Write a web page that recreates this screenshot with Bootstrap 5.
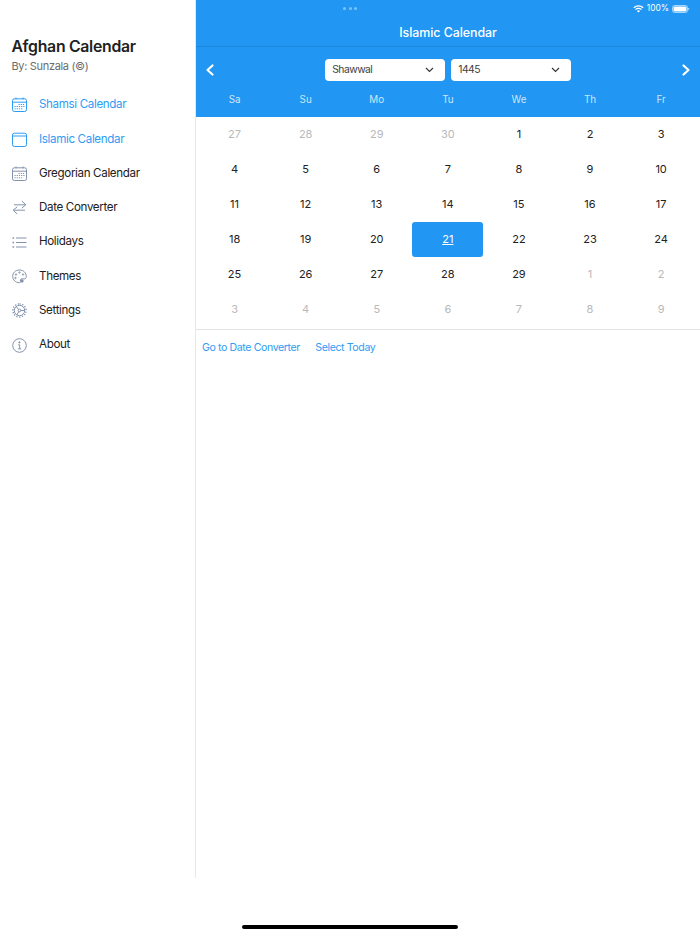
<!DOCTYPE html>
<html>
<head>
<meta charset="utf-8">
<link href="https://cdn.jsdelivr.net/npm/bootstrap@5.3.0/dist/css/bootstrap.min.css" rel="stylesheet">
<style>
html,body{height:934px;overflow:hidden;background:#fff}
body{font-family:Inter,"Liberation Sans",sans-serif;color:#212121;position:relative}
.shell{height:878px}
.side{width:196px;flex:none;border-right:1px solid #e8e8e8}
.brand{padding:36.500px 0 0 11.500px;height:87.800px}
.brand-t{font-size:15.800px;font-weight:600;line-height:19px;letter-spacing:-.28px;color:#212121}
.brand-s{font-size:11px;line-height:13px;margin-top:4.500px;color:#6c6c6c;letter-spacing:-.33px}
.mitem{height:34.300px;padding-left:12px;font-size:11.600px;letter-spacing:-.35px;color:#212121;gap:12px}
.mitem svg{width:15px;height:15px;flex:none;fill:none;stroke:#8493ad;stroke-width:1}
.mitem.on{color:#2f9cf4}
.mitem.on svg{stroke:#2f9cf4}
.main{flex:1;min-width:0}
.hero{background:#2196f3;height:117px;color:#fff}
.tbar{height:47px;border-bottom:1px solid #1d87dc;font-size:12.400px;font-weight:500;padding-top:25px;line-height:16px;letter-spacing:-.05px}
.selrow{height:45px;padding:1px 7px 0}
.chev{width:14px;height:14px;fill:none;stroke:#fff;stroke-width:2.200;stroke-linecap:round;stroke-linejoin:round}
.picker{width:119.500px;height:22px;background:#fff;border-radius:4px;color:#3d3d3d;font-size:10.300px;letter-spacing:-.5px;padding:0 11px 0 7px}
.picker svg{width:9px;height:6px;fill:none;stroke:#333;stroke-width:1.100}
.pickset{gap:6.500px}
.calgrid{display:grid;grid-template-columns:repeat(7,71.100px);padding:0 0 0 3px}
.wk{font-size:9.800px;color:#cfe6fb;height:25px;padding-bottom:9px}
.days{border-bottom:1px solid #e3e3e3;height:213px;grid-auto-rows:34.900px}
.dcell{font-size:11px;color:#212121}
.dcell.off{color:#b9b9b9}
.dcell.sel{background:#2196f3;color:#fff;border-radius:3px;text-decoration:underline}
.foot{padding:11px 6px;gap:15.500px;font-size:10.600px;letter-spacing:-.4px;color:#2f9cf4;line-height:13px}
.ipad-stat{position:absolute;top:0;left:0;right:0;height:16px;color:#fff}
.dots{position:absolute;left:343px;top:7px;display:flex;gap:2.500px}
.dots i{width:3px;height:3px;border-radius:50%;background:#7cc4fb}
.stat-r{position:absolute;right:10px;top:3px;font-size:8.400px;line-height:11px;gap:3px}
.homebar{position:absolute;left:242px;top:925px;width:216px;height:3.500px;border-radius:3px;background:#000}
</style>
</head>
<body>
<div class="shell d-flex">
  <aside class="side">
    <div class="brand">
      <div class="brand-t">Afghan Calendar</div>
      <div class="brand-s">By: Sunzala (©)</div>
    </div>
    <div class="d-flex align-items-center mitem on"><svg viewBox="0 0 15 15"><rect x=".5" y="1.800" width="14" height="12.700" rx="1.800"/><path d="M.5 5.200h14M4 .5v2M11 .5v2"/><path stroke-dasharray="1.200 1" d="M6.500 7.500h6M2.500 9.500h10M2.500 11.800h8"/></svg><span>Shamsi Calendar</span></div>
    <div class="d-flex align-items-center mitem on"><svg viewBox="0 0 15 15"><rect x=".5" y="1.200" width="14" height="13.300" rx="1.800"/><path d="M.5 4h14"/></svg><span>Islamic Calendar</span></div>
    <div class="d-flex align-items-center mitem"><svg viewBox="0 0 15 15"><rect x=".5" y="1.800" width="14" height="12.700" rx="1.800"/><path d="M.5 5.200h14M4 .5v2M11 .5v2"/><path stroke-dasharray="1.200 1" d="M6.500 7.500h6M2.500 9.500h10M2.500 11.800h8"/></svg><span>Gregorian Calendar</span></div>
    <div class="d-flex align-items-center mitem"><svg viewBox="0 0 15 15"><path d="M2 4.800h11.500M9.800 1 13.800 4.800 9.800 8.200M13 10.200H1.500M5.200 6.800 1.200 10.200 5.200 14"/></svg><span>Date Converter</span></div>
    <div class="d-flex align-items-center mitem"><svg viewBox="0 0 15 15"><path d="M4 3h10.500M4 7.500h10.500M4 12h10.500"/><path stroke-width="1.600" d="M.5 3h1.600M.5 7.500h1.600M.5 12h1.600"/></svg><span>Holidays</span></div>
    <div class="d-flex align-items-center mitem"><svg viewBox="0 0 15 15"><path d="M7.500 1C3.500 1 .7 3.800.7 7.300c0 3.600 3 6.400 6.500 6.400 1.300 0 1.700-.8 1.300-1.700-.5-1.200.1-2.100 1.400-2.100h2.300c1.300 0 2.100-.8 2.100-2.200C14.300 3.700 11.400 1 7.500 1z"/><circle cx="4" cy="5.500" r=".7"/><circle cx="7.500" cy="3.500" r=".7"/><circle cx="11" cy="5.500" r=".7"/><circle cx="3.500" cy="9" r=".7"/><circle cx="10" cy="12" r="1.200" fill="#8493ad"/></svg><span>Themes</span></div>
    <div class="d-flex align-items-center mitem"><svg viewBox="0 0 15 15"><circle cx="7.500" cy="7.500" r="5.200"/><circle cx="7.500" cy="7.500" r="1.300"/><path d="M6.500 6.500 4.200 3.500M8.800 7.500h3.900M6.800 8.600 4.800 12"/><path stroke-width="1.300" stroke-dasharray="1.300 1.500" d="M7.500.9a6.600 6.600 0 1 1-.01 0"/></svg><span>Settings</span></div>
    <div class="d-flex align-items-center mitem"><svg viewBox="0 0 15 15"><circle cx="7.500" cy="7.500" r="6.800"/><path d="M6.200 6.800h1.500v4M6 10.800h3.200"/><circle cx="7.400" cy="4.400" r=".6" fill="#8493ad"/></svg><span>About</span></div>
  </aside>
  <main class="main">
    <div class="hero">
      <div class="tbar text-center">Islamic Calendar</div>
      <div class="selrow d-flex align-items-center justify-content-between">
        <svg class="chev" viewBox="0 0 14 14"><path d="M9.500 2.500 4.500 7l5 4.500"/></svg>
        <div class="d-flex pickset">
          <div class="picker d-flex align-items-center justify-content-between"><span>Shawwal</span><svg viewBox="0 0 9 6"><path d="M1 1l3.500 3.500L8 1"/></svg></div>
          <div class="picker d-flex align-items-center justify-content-between"><span>1445</span><svg viewBox="0 0 9 6"><path d="M1 1l3.500 3.500L8 1"/></svg></div>
        </div>
        <svg class="chev" viewBox="0 0 14 14"><path d="M4.500 2.500 9.500 7l-5 4.500"/></svg>
      </div>
      <div class="calgrid wk text-center align-items-center">
        <div>Sa</div><div>Su</div><div>Mo</div><div>Tu</div><div>We</div><div>Th</div><div>Fr</div>
      </div>
    </div>
    <div class="calgrid days text-center">
      <div class="dcell off d-flex align-items-center justify-content-center">27</div><div class="dcell off d-flex align-items-center justify-content-center">28</div><div class="dcell off d-flex align-items-center justify-content-center">29</div><div class="dcell off d-flex align-items-center justify-content-center">30</div><div class="dcell d-flex align-items-center justify-content-center">1</div><div class="dcell d-flex align-items-center justify-content-center">2</div><div class="dcell d-flex align-items-center justify-content-center">3</div>
      <div class="dcell d-flex align-items-center justify-content-center">4</div><div class="dcell d-flex align-items-center justify-content-center">5</div><div class="dcell d-flex align-items-center justify-content-center">6</div><div class="dcell d-flex align-items-center justify-content-center">7</div><div class="dcell d-flex align-items-center justify-content-center">8</div><div class="dcell d-flex align-items-center justify-content-center">9</div><div class="dcell d-flex align-items-center justify-content-center">10</div>
      <div class="dcell d-flex align-items-center justify-content-center">11</div><div class="dcell d-flex align-items-center justify-content-center">12</div><div class="dcell d-flex align-items-center justify-content-center">13</div><div class="dcell d-flex align-items-center justify-content-center">14</div><div class="dcell d-flex align-items-center justify-content-center">15</div><div class="dcell d-flex align-items-center justify-content-center">16</div><div class="dcell d-flex align-items-center justify-content-center">17</div>
      <div class="dcell d-flex align-items-center justify-content-center">18</div><div class="dcell d-flex align-items-center justify-content-center">19</div><div class="dcell d-flex align-items-center justify-content-center">20</div><div class="dcell sel d-flex align-items-center justify-content-center">21</div><div class="dcell d-flex align-items-center justify-content-center">22</div><div class="dcell d-flex align-items-center justify-content-center">23</div><div class="dcell d-flex align-items-center justify-content-center">24</div>
      <div class="dcell d-flex align-items-center justify-content-center">25</div><div class="dcell d-flex align-items-center justify-content-center">26</div><div class="dcell d-flex align-items-center justify-content-center">27</div><div class="dcell d-flex align-items-center justify-content-center">28</div><div class="dcell d-flex align-items-center justify-content-center">29</div><div class="dcell off d-flex align-items-center justify-content-center">1</div><div class="dcell off d-flex align-items-center justify-content-center">2</div>
      <div class="dcell off d-flex align-items-center justify-content-center">3</div><div class="dcell off d-flex align-items-center justify-content-center">4</div><div class="dcell off d-flex align-items-center justify-content-center">5</div><div class="dcell off d-flex align-items-center justify-content-center">6</div><div class="dcell off d-flex align-items-center justify-content-center">7</div><div class="dcell off d-flex align-items-center justify-content-center">8</div><div class="dcell off d-flex align-items-center justify-content-center">9</div>
    </div>
    <div class="foot d-flex"><span>Go to Date Converter</span><span>Select Today</span></div>
  </main>
</div>
<div class="ipad-stat">
  <div class="dots"><i></i><i></i><i></i></div>
  <div class="stat-r d-flex align-items-center">
    <svg width="11" height="8" viewBox="0 0 11 8" fill="none" stroke="#fff" stroke-width="1.300"><path d="M.8 2.800a6.600 6.600 0 0 1 9.400 0M2.500 4.600a4.200 4.200 0 0 1 6 0"/><path fill="#fff" stroke="none" d="M3.900 5.900a2.300 2.300 0 0 1 3.200 0L5.500 7.600z"/></svg>
    <span>100%</span>
    <svg width="18" height="8" viewBox="0 0 18 8"><rect x=".5" y=".5" width="15" height="7" rx="2" fill="none" stroke="#a6d5fa"/><rect x="1.500" y="1.500" width="13" height="5" rx="1" fill="#fff"/><rect x="16.200" y="2.700" width="1" height="2.600" rx=".5" fill="#a6d5fa"/></svg>
  </div>
</div>
<div class="homebar"></div>
</body>
</html>
